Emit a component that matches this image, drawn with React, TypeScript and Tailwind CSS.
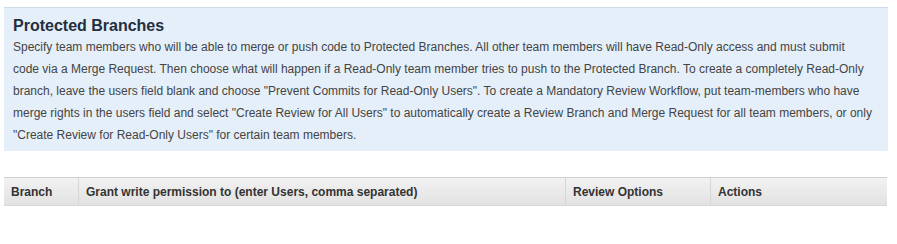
const lines = [
  'Specify team members who will be able to merge or push code to Protected Branches. All other team members will have Read-Only access and must submit',
  'code via a Merge Request. Then choose what will happen if a Read-Only team member tries to push to the Protected Branch. To create a completely Read-Only',
  'branch, leave the users field blank and choose "Prevent Commits for Read-Only Users". To create a Mandatory Review Workflow, put team-members who have',
  'merge rights in the users field and select "Create Review for All Users" to automatically create a Review Branch and Merge Request for all team members, or only',
  '"Create Review for Read-Only Users" for certain team members.',
];

const columns = [
  { label: 'Branch', width: 'w-[75px]' },
  { label: 'Grant write permission to (enter Users, comma separated)', width: 'w-[487px]' },
  { label: 'Review Options', width: 'w-[145px]' },
  { label: 'Actions', width: 'flex-1' },
];

export default function App() {
  return (
    <div className="min-h-[244px] bg-white pt-[7px] font-['Liberation_Sans',Arial,sans-serif]">
      <div className="mx-[4px] w-[884px] border-t border-[#cddcec] bg-[#e5eff9] px-[9px] pt-[8px] pb-[5px]">
        <h2 className="text-[16px] leading-[20px] font-bold text-[#232f3e]">Protected Branches</h2>
        <p className="text-[12px] leading-[22px] text-[#444]">
          {lines.map((l, i) => (
            <span key={i} className="block whitespace-nowrap">
              {l}
            </span>
          ))}
        </p>
      </div>

      <div className="mx-[4px] mt-[26px] flex w-[883px] border-t border-b border-t-[#cfcfcf] border-b-[#d8d8d8] bg-gradient-to-b from-[#f2f2f2] to-[#e2e2e2]">
        {columns.map((c, i) => (
          <div
            key={c.label}
            className={`${c.width} h-[27px] flex items-center pl-[7px] text-[12px] font-bold text-[#333] ${
              i < columns.length - 1 ? 'border-r border-[#d6d6d6]' : ''
            }`}
          >
            {c.label}
          </div>
        ))}
      </div>
    </div>
  );
}
